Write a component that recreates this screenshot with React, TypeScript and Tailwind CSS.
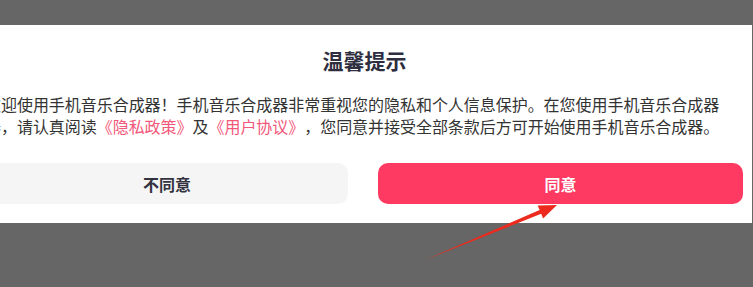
import React from "react";

export default function App() {
  return (
    <div
      className="relative w-[753px] h-[287px] overflow-hidden bg-[#666666]"
      style={{ fontFamily: '"Noto Sans CJK SC", "Noto Sans", sans-serif' }}
    >
      <div className="h-[25px]" />
      <div className="bg-white w-[752px] h-[198px] pt-[21px] pb-[19px]">
        <div className="ml-[-14px] w-[757px] flex flex-col">
          <div className="text-center text-[21px] leading-[28px] font-bold text-[#2e2e40]">
            温馨提示
          </div>
          <div className="ml-[-1px] mt-[19px] text-[16px] leading-[22px] tracking-[-0.04px] text-[#333333] whitespace-nowrap [text-spacing-trim:space-all] [font-feature-settings:'chws'_0,'halt'_0]">
            欢迎使用手机音乐合成器！手机音乐合成器非常重视您的隐私和个人信息保护。在您使用手机音乐合成器
            <br />
            器，请认真阅读<span className="text-[#f2587a]">《隐私政策》</span>及
            <span className="text-[#f2587a]">《用户协议》</span>，您同意并接受全部条款后方可开始使用手机音乐合成器。
          </div>
          <div className="mt-[26px] flex gap-[30px]">
            <div className="w-[362px] h-[41px] rounded-[10px] bg-[#f5f5f5] flex items-center justify-center text-[16px] font-bold text-[#333340]">
              不同意
            </div>
            <div className="w-[365px] h-[41px] rounded-[10px] bg-[#ff3a62] flex items-center justify-center text-[16px] font-bold text-white">
              同意
            </div>
          </div>
        </div>
      </div>
      <svg className="absolute left-0 top-0" width="753" height="287" viewBox="0 0 753 287">
        <polygon
          points="425,260 541.2,213.7 543.1,218.4 557,205 537.7,205.4 539.6,210.1"
          fill="#ec2a1e"
        />
      </svg>
    </div>
  );
}
